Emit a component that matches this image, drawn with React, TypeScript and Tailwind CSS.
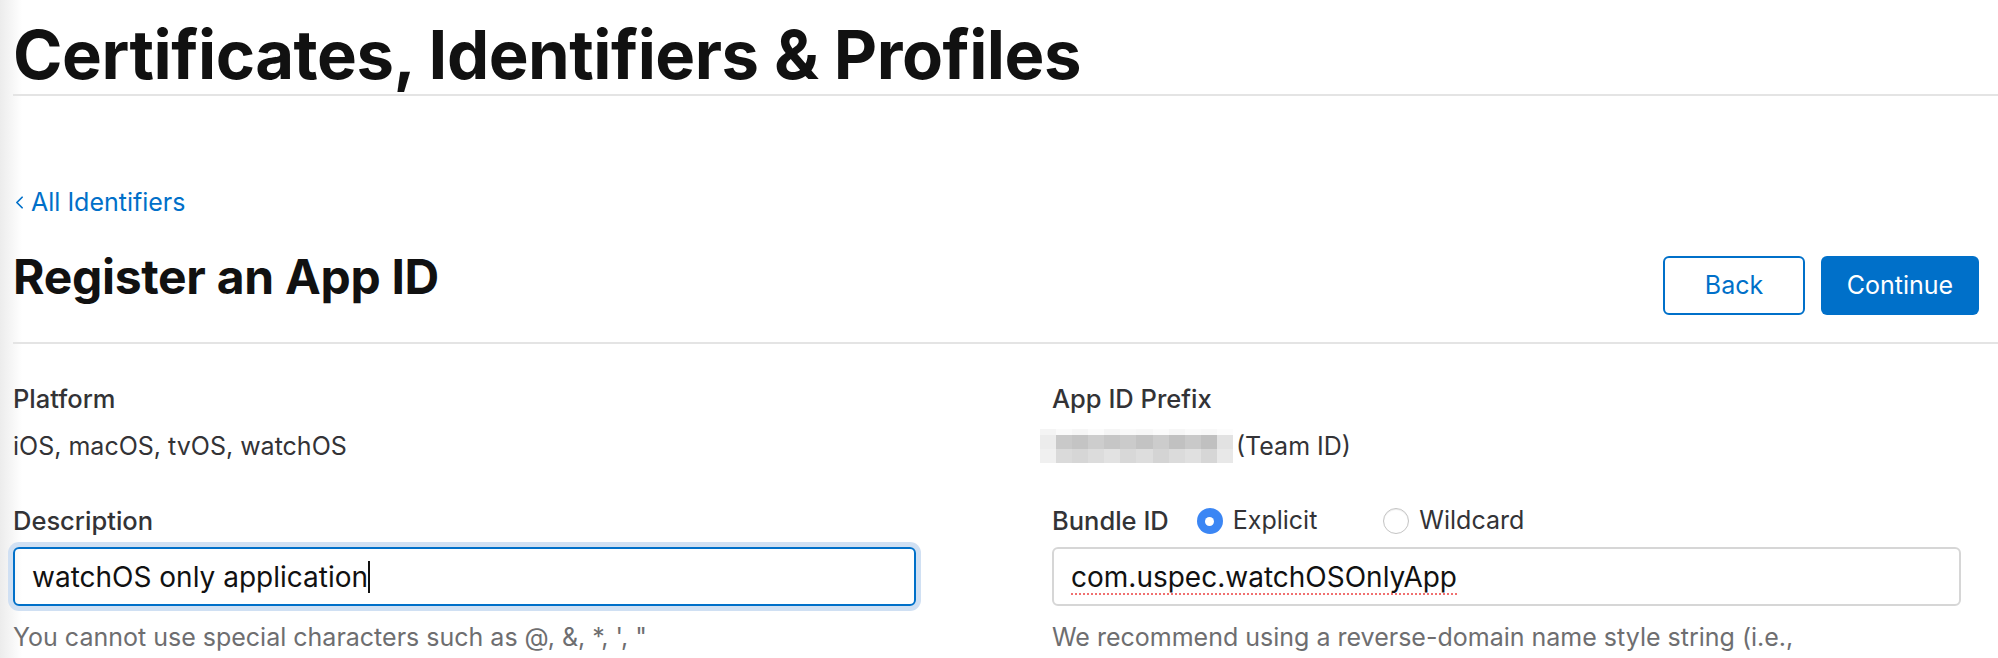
import { ChevronLeft } from "lucide-react";

const teamIdTiles = [
  ["#f4f4f4", "#fafafa", "#f6f6f6", "#fbfbfb", "#f5f5f5", "#f9f9f9", "#f7f7f7", "#fbfbfb", "#f6f6f6", "#fafafa", "#f8f8f8", "#fcfcfc"],
  ["#ececec", "#c9c9c9", "#c4c4c4", "#cdcdcd", "#c6c6c6", "#cbcbcb", "#c3c3c3", "#cccccc", "#c1c1c1", "#c9c9c9", "#c0c0c0", "#e2e2e2"],
  ["#f0f0f0", "#dadada", "#d6d6d6", "#dcdcdc", "#e2e2e2", "#d8d8d8", "#dddddd", "#d4d4d4", "#dbdbdb", "#e0e0e0", "#d6d6d6", "#e8e8e8"],
];

function BlurredTeamId() {
  // pixelated placeholder where the team id was masked
  return (
    <div className="flex flex-col w-[193px] -ml-[12px]">
      {teamIdTiles.map((row, r) => (
        <div key={r} className={`flex ${r === 0 ? "h-[6px]" : "h-[14px]"}`}>
          {row.map((c, i) => (
            <div key={i} className="flex-1" style={{ backgroundColor: c }} />
          ))}
        </div>
      ))}
    </div>
  );
}

function Radio({ checked, label }: { checked?: boolean; label: string }) {
  return (
    <label className="flex items-center gap-[10px]">
      {checked ? (
        <span className="w-[26px] h-[26px] rounded-full bg-[#3b86f4] flex items-center justify-center">
          <span className="w-[9px] h-[9px] rounded-full bg-white" />
        </span>
      ) : (
        <span className="w-[26px] h-[26px] rounded-full bg-white border border-[#c4c4c4] shadow-[inset_0_1px_1px_rgba(0,0,0,0.08)]" />
      )}
      <span className="text-[25px] text-[#333336]">{label}</span>
    </label>
  );
}

export default function App() {
  return (
    <div
      className="min-h-screen w-full bg-[linear-gradient(to_right,#ececec,#ffffff_22px)] text-[#333336] overflow-hidden"
      style={{ fontFamily: "Inter, 'Noto Sans', sans-serif" }}
    >
      <div className="pl-[13px]">
        {/* Page header */}
        <h1 className="text-[67px] font-bold leading-[72px] pt-[19px] pb-[3px] text-[#111111] tracking-[-0.5px] border-b-2 border-[#e4e4e4]">
          Certificates, Identifiers &amp; Profiles
        </h1>

        <a className="mt-[91px] flex items-center text-[25px] leading-[30px] text-[#0070c9] -ml-[4px]">
          <ChevronLeft className="w-[21px] h-[21px]" strokeWidth={2} />
          <span className="ml-[1px]">All Identifiers</span>
        </a>

        {/* Title row */}
        <div className="mt-[36px] pb-[27px] border-b-2 border-[#e4e4e4] flex items-start justify-between">
          <h2 className="text-[48px] font-bold leading-[48px] text-[#111111] tracking-[-0.3px]">
            Register an App ID
          </h2>
          <div className="flex gap-[16px] mt-[3px] mr-[19px]">
            <button className="w-[142px] h-[59px] rounded-[6px] border-2 border-[#0070c9] text-[#0070c9] text-[25px] bg-white">
              Back
            </button>
            <button className="w-[158px] h-[59px] rounded-[6px] bg-[#0070c9] text-white text-[25px]">
              Continue
            </button>
          </div>
        </div>

        {/* Form */}
        <div className="grid grid-cols-[903px_909px] gap-x-[136px] mt-[40px]">
          <div>
            <div className="text-[25.5px] leading-[30px] font-medium">Platform</div>
            <div className="mt-[17px] text-[25px] leading-[30px]">iOS, macOS, tvOS, watchOS</div>

            <div className="mt-[45px] text-[25.5px] leading-[30px] font-medium">Description</div>
            <div className="mt-[11px] h-[59px] rounded-[6px] border-2 border-[#0070c9] shadow-[0_0_0_5px_#d0e0f3] flex items-center px-[17px]">
              <span className="text-[28px] text-[#111111]">watchOS only application</span>
              <span className="w-[2px] h-[32px] bg-[#111111]" />
            </div>
            <div className="mt-[16px] text-[25px] leading-[30px] text-[#6e6e70]">
              You cannot use special characters such as @, &amp;, *, ', "
            </div>
          </div>

          <div>
            <div className="text-[25.5px] leading-[30px] font-medium">App ID Prefix</div>
            <div className="mt-[17px] flex items-center h-[30px]">
              <BlurredTeamId />
              <span className="ml-[3px] text-[25px] leading-[30px]">(Team ID)</span>
            </div>

            <div className="mt-[45px] flex items-center h-[30px]">
              <span className="text-[25.5px] font-medium mr-[28px]">Bundle ID</span>
              <Radio checked label="Explicit" />
              <div className="w-[66px]" />
              <Radio label="Wildcard" />
            </div>
            <div className="mt-[11px] h-[59px] rounded-[6px] border-2 border-[#d6d6d6] flex items-center px-[17px]">
              <span className="text-[28px] text-[#111111] underline decoration-dotted decoration-[#f07070] decoration-2 underline-offset-[7px]">
                com.uspec.watchOSOnlyApp
              </span>
            </div>
            <div className="mt-[16px] text-[25px] leading-[30px] text-[#6e6e70]">
              We recommend using a reverse-domain name style string (i.e.,
            </div>
          </div>
        </div>
      </div>
    </div>
  );
}
